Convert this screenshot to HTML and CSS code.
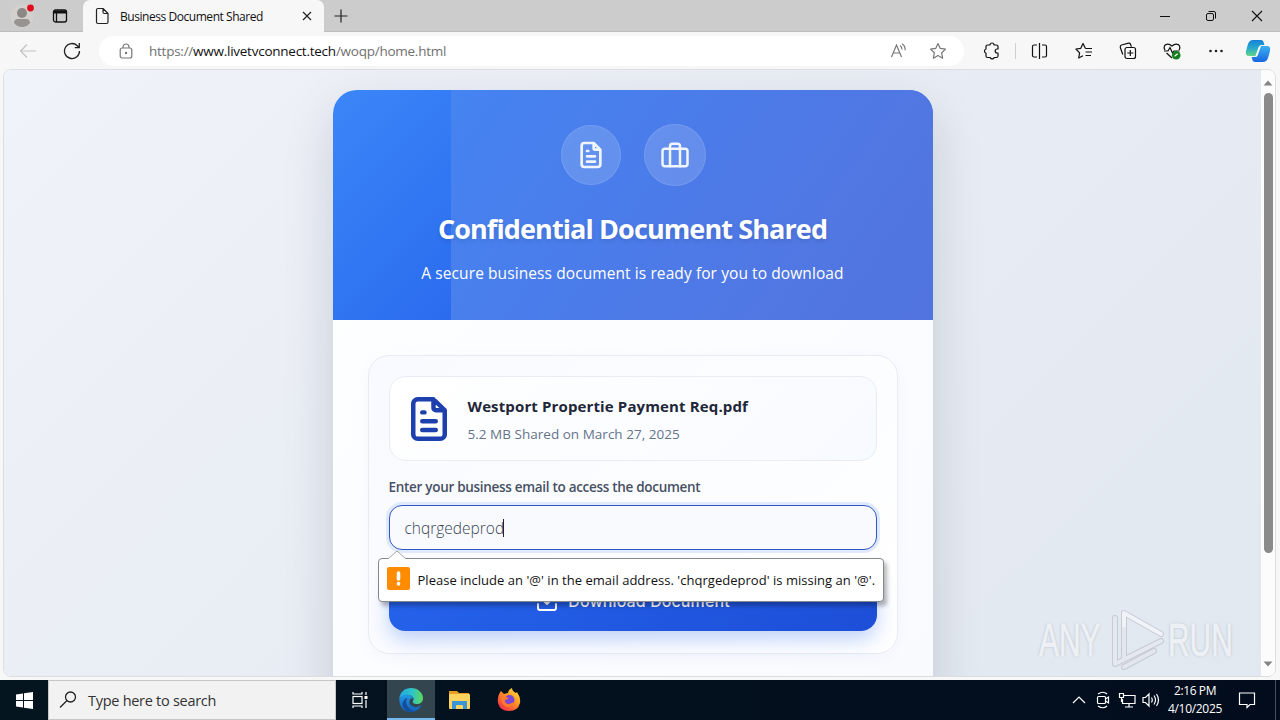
FILE: index.html
```html
<!DOCTYPE html>
<html lang="en">
<head>
<meta charset="utf-8">
<title>Business Document Shared</title>
<link rel="stylesheet" href="styles.css">
</head>
<body>
<div class="desktop">
  <div class="titlebar">
    <div class="tab-tools">
      <svg class="avatar" width="24" height="24" viewBox="0 0 24 24"><circle cx="12" cy="12" r="11.500" fill="#d3d0ce"/><circle cx="12" cy="9" r="5" fill="#8c8886"/><path d="M4 19q0-4 4-4h8q4 0 4 4q-3 4-8 4t-8-4z" fill="#979391"/><circle cx="20.500" cy="4" r="3.400" fill="#e00b1c"/></svg>
      <svg width="16" height="16" viewBox="0 0 16 16" fill="none" stroke="#111" stroke-width="1.300"><rect x="1.500" y="2" width="13" height="12" rx="2"/><path d="M1.500 4h13" stroke-width="3"/><path d="M4.500 5v9"/></svg>
    </div>
    <div class="tab">
      <svg width="16" height="18" viewBox="0 0 16 18" fill="none" stroke="#222" stroke-width="1.200" stroke-linejoin="round"><path d="M2.500 3q0-1.500 1.500-1.500h5L14 6.500V15q0 1.500-1.500 1.500H4q-1.500 0-1.500-1.500zM9 1.500V5q0 1.500 1.500 1.500H14"/></svg>
      <span class="tab-title">Business Document Shared</span>
      <svg class="tab-close" width="10" height="10" viewBox="0 0 10 10" stroke="#222" stroke-width="1.200"><path d="M1 1l8 8M9 1L1 9"/></svg>
    </div>
    <svg class="new-tab" width="16" height="16" viewBox="0 0 16 16" stroke="#222" stroke-width="1.200"><path d="M8 1.500v13M1.500 8h13"/></svg>
    <div class="window-buttons">
      <svg width="12" height="12" viewBox="0 0 12 12" stroke="#111"><path d="M1 6.500h10"/></svg>
      <svg width="12" height="12" viewBox="0 0 12 12" fill="none" stroke="#111"><rect x="1.500" y="3.500" width="7" height="7" rx="1.500"/><path d="M3.500 1.500H9q1.500 0 1.500 1.500v5.500"/></svg>
      <svg width="12" height="12" viewBox="0 0 12 12" stroke="#111" stroke-width="1.100"><path d="M1 1l10 10M11 1L1 11"/></svg>
    </div>
  </div>

  <div class="toolbar">
    <div class="nav">
      <svg width="18" height="18" viewBox="0 0 18 18" fill="none" stroke="#c3c3c3" stroke-width="1.200"><path d="M17 9H2M8 2.500L1.500 9L8 15.500"/></svg>
      <svg width="18" height="18" viewBox="0 0 18 18" fill="none" stroke="#222" stroke-width="1.300"><path d="M16.500 9A7.500 7.500 0 1 1 14.300 3.700L16 5.500M16.300 1v4.700h-4.600"/></svg>
    </div>
    <div class="address">
      <svg width="14" height="16" viewBox="0 0 14 16" fill="none" stroke="#777" stroke-width="1.200"><rect x="1.200" y="5" width="11.600" height="10" rx="2"/><path d="M4 5V4a3 3 0 0 1 6 0v1"/><circle cx="7" cy="10" r=".6" fill="#777"/></svg>
      <span class="url">https://<span class="host">www.livetvconnect.tech</span>/woqp/home.html</span>
      <svg class="read" width="18" height="16" viewBox="0 0 18 16" fill="none" stroke="#777" stroke-width="1.200"><path d="M1.500 14L6.500 2l5 12M3.200 10h6.600M10 2.500q2 1.500 2 4M12 .8q3.300 2 3.200 6.500"/></svg>
      <svg class="fav" width="18" height="18" viewBox="0 0 18 18" fill="none" stroke="#777" stroke-width="1.200" stroke-linejoin="round"><path d="M9 1.500l2.300 4.900 5.200.7-3.800 3.700.9 5.400L9 13.600l-4.600 2.600.9-5.400L1.500 7.100l5.200-.7z"/></svg>
    </div>
    <div class="extensions">
      <svg width="18" height="18" viewBox="0 0 18 18" fill="none" stroke="#111" stroke-width="1.200" stroke-linejoin="round"><path d="M5.500 3H8a2 2 0 0 1 4 0h2.500q1.500 0 1.500 1.500V7h-.8a2 2 0 0 0 0 4h.8v3q0 1.500-1.500 1.500h-2.300a2.100 2.100 0 0 1-4 0H5.500Q4 15.500 4 14v-2.800a2.200 2.200 0 0 1 0-4.200V4.500Q4 3 5.500 3z"/></svg>
    </div>
    <i class="divider"></i>
    <div class="actions">
      <svg width="18" height="16" viewBox="0 0 18 16" fill="none" stroke="#111" stroke-width="1.200"><path d="M8.500 0v16M6 2H3Q1.500 2 1.500 3.500v9Q1.500 14 3 14h3M11 2h3q1.500 0 1.500 1.500v9q0 1.500-1.500 1.500h-3"/></svg>
      <svg width="18" height="18" viewBox="0 0 18 18" fill="none" stroke="#111" stroke-width="1.200" stroke-linejoin="round"><path d="M10.500 6.500L8 1.500 5.800 6.300.9 7l3.700 3.800L3.700 16 8 13.700M10.500 6.500H17M10.500 10H17M10.500 13.500H16"/></svg>
      <svg width="18" height="18" viewBox="0 0 18 18" fill="none" stroke="#111" stroke-width="1.200"><rect x="6" y="5.500" width="10.500" height="11" rx="2"/><path d="M11.300 8v6M8.300 11h6M3.800 12.500L1.300 5.500Q1 3.500 2.500 3l7.100-1.800q1.400-.3 1.900 1l.9 2.600"/></svg>
      <svg width="18" height="18" viewBox="0 0 18 18" fill="none" stroke="#111" stroke-width="1.200"><path d="M2 8Q0 5 2.500 2.800 5.500.8 9 4q3.500-3.200 6.500-1.200Q18 5 16 8M1 9h4l2-3.500 2.500 5.500 1.500-2h5.500M3.500 11L9 16"/><circle cx="13.200" cy="13.200" r="4.300" fill="#13801b" stroke="none"/><path d="M11.500 14.200l3.200-2.500" stroke="#fff"/></svg>
      <svg width="18" height="18" viewBox="0 0 18 18" fill="#222"><circle cx="3.500" cy="9" r="1.300"/><circle cx="9" cy="9" r="1.300"/><circle cx="14.500" cy="9" r="1.300"/></svg>
    </div>
    <svg class="copilot" width="26" height="24" viewBox="0 0 26 24"><defs><linearGradient id="cpa" x1="0" y1="0" x2="0" y2="1"><stop offset="0" stop-color="#147fd7"/><stop offset=".5" stop-color="#27a9cf"/><stop offset="1" stop-color="#62d684"/></linearGradient><linearGradient id="cpb" x1="0" y1="0" x2="0" y2="1"><stop offset="0" stop-color="#3bb0f1"/><stop offset="1" stop-color="#1867e2"/></linearGradient></defs><path d="M8 1h8q2 0 2.600 2l.8 3h-3q-2 0-2.700 2.500L11 17H4q-4 0-3-5l2-7q1.500-4 5-4z" fill="url(#cpa)"/><path d="M18 23h-8q-2 0-2.600-2l-.8-3h3q2 0 2.700-2.500L15 7h7q4 0 3 5l-2 7q-1.500 4-5 4z" fill="url(#cpb)"/><path d="M13.500 8.500q.7-2 2.700-2l-3.600 10q-.7 1.500-2.500 1.500z" fill="#fff"/></svg>
  </div>

  <div class="viewport">
    <div class="page">
      <div class="card">
        <div class="hero">
          <div class="sheen"></div>
          <div class="badges">
            <div class="badge small"><svg width="32" height="32" viewBox="0 0 24 24"><path d="M14 3v4a1 1 0 0 0 1 1h4M14 3l5 5v11a2 2 0 0 1-2 2H7a2 2 0 0 1-2-2V5a2 2 0 0 1 2-2zM9 9h1M9 13h6M9 17h6"/></svg></div>
            <div class="badge large"><svg width="30" height="30" viewBox="0 0 24 24"><rect x="2" y="7" width="20" height="14" rx="2"/><path d="M16 21V5a2 2 0 0 0-2-2h-4a2 2 0 0 0-2 2v16"/></svg></div>
          </div>
          <h1><span>Confidential Document Shared</span></h1>
          <p><span>A secure business document is ready for you to download</span></p>
        </div>
        <div class="content">
          <div class="form">
            <div class="file">
              <svg class="file-icon" width="36" height="44" viewBox="4 2 16 20" preserveAspectRatio="none"><path d="M14 3v4a1 1 0 0 0 1 1h4M14 3l5 5v11a2 2 0 0 1-2 2H7a2 2 0 0 1-2-2V5a2 2 0 0 1 2-2zM9 9h1M9 13h6M9 17h6"/></svg>
              <div class="file-text">
                <div class="file-name">Westport Propertie Payment Req.pdf</div>
                <div class="file-meta">5.2 MB Shared on March 27, 2025</div>
              </div>
            </div>
            <div class="label">Enter your business email to access the document</div>
            <div class="field"><span class="value">chqrgedeprod</span><i class="caret"></i>
              <div class="bubble">
                <svg class="pointer" width="18" height="9" viewBox="0 0 18 9"><path d="M0 9L9 1l9 8" fill="#fff" stroke="#a0a3a8"/></svg>
                <svg class="warn" width="23" height="23" viewBox="0 0 23 23"><rect width="23" height="23" rx="2" fill="#ff8c00"/><path d="M11.500 6v6M11.500 16.500v.4" stroke="#fff" stroke-width="3.600" stroke-linecap="round"/></svg>
                <span class="bubble-text">Please include an '@' in the email address. 'chqrgedeprod' is missing an '@'.</span>
              </div>
            </div>
            <div class="download">
              <svg width="24" height="24" viewBox="0 0 24 24" fill="none" stroke="#fff" stroke-width="2" stroke-linecap="round" stroke-linejoin="round"><path d="M21 15v4a2 2 0 0 1-2 2H5a2 2 0 0 1-2-2v-4M7 10l5 5 5-5M12 15V3"/></svg>
              <span class="download-text">Download Document</span>
            </div>
          </div>
        </div>
      </div>
      <div class="watermark">
        <span class="wm-any">ANY</span>
        <svg width="56" height="62" viewBox="0 0 56 62" fill="none" stroke-linejoin="round" stroke-linecap="round"><g stroke="#c3c8d2" stroke-width="6"><path d="M15 43V4L52 25"/><path d="M6 9v46L52 32"/><path d="M15 20v28M15 58l30-16"/></g><g stroke="#f3f5f9" stroke-width="4"><path d="M15 43V4L52 25"/><path d="M6 9v46L52 32" stroke="#e6e9ef"/><path d="M15 20v28M15 58l30-16" stroke="#e3e6ec"/></g></svg>
        <span class="wm-run">RUN</span>
      </div>
    </div>
    <div class="scrollbar">
      <svg width="10" height="6" viewBox="0 0 10 6"><path d="M.5 5.500L5 .5l4.500 5z" fill="#858585"/></svg>
      <i class="thumb"></i>
      <svg width="10" height="6" viewBox="0 0 10 6"><path d="M.5 .5h9L5 5.500z" fill="#858585"/></svg>
    </div>
  </div>

  <div class="taskbar">
    <div class="start"><svg width="17" height="17" viewBox="0 0 17 17" fill="#fff"><path d="M0 2.500L7 1.500V8H0zM8 1.300L17 0v8H8zM0 9h7v6.500l-7-1zM8 9h9v8l-9-1.300z"/></svg></div>
    <div class="search"><svg width="18" height="18" viewBox="0 0 18 18" fill="none" stroke="#222" stroke-width="1.300"><circle cx="11.500" cy="6" r="5"/><path d="M8 9.500L1 16.500"/></svg><span class="search-text">Type here to search</span></div>
    <div class="app taskview"><svg width="18" height="18" viewBox="0 0 18 18" fill="none" stroke="#fff" stroke-width="1.200"><rect x="2" y="5.500" width="9" height="7"/><path d="M2 1v2h9V1M2 17v-2h9v2M15 1v3M15 9v8"/><path d="M13.500 6.500h3" stroke-width="3"/></svg></div>
    <div class="app active"><svg width="24" height="24" viewBox="0 0 24 24"><defs><linearGradient id="eg" x1="0" y1="0" x2="1" y2="0"><stop offset="0" stop-color="#24a7e3"/><stop offset=".55" stop-color="#2dc5c8"/><stop offset="1" stop-color="#62d957"/></linearGradient><linearGradient id="eb" x1="0" y1="0" x2="0" y2="1"><stop offset="0" stop-color="#229be2"/><stop offset="1" stop-color="#1260bd"/></linearGradient></defs><path d="M.3 10.500C1 4 6 0 12 0c7 0 12 5 12 10 0 4-3 6-6 6s-5-1.300-4-3c2-3-1-6-5-6-4.500 0-7.500 2-8.700 3.500z" fill="url(#eg)"/><path d="M.2 11C2 7 6 6 9 6.500q4 .8 5.500 4-3-1-4 2-1 5 5 6.500 4 .7 7-2Q19 24 12 24 1 24 .2 11z" fill="url(#eb)"/><path d="M8.500 9.500Q5 16 11 21q2 2 5 2-4 1.500-8.500 0-5.500-4-3.500-9 1.500-3.500 4.500-4.500z" fill="#154d9b"/></svg></div>
    <div class="app"><svg width="23" height="20" viewBox="0 0 23 20"><path d="M1 1h8l2 2h10v4H1z" fill="#e59f22"/><rect x="1" y="4" width="21" height="15" rx="1" fill="#ffd45e"/><path d="M4 19v-8h15v8h-4v-3q0-1-1-1H9q-1 0-1 1v3z" fill="#3c95d5"/></svg></div>
    <div class="app firefox"><svg width="24" height="24" viewBox="0 0 24 24"><defs><linearGradient id="ff" x1="1" y1="0" x2=".2" y2="1"><stop offset="0" stop-color="#ffec45"/><stop offset=".45" stop-color="#ff9b25"/><stop offset="1" stop-color="#f4284d"/></linearGradient></defs><path d="M4 3l3 3q3-1 4-1 0-3 4-5 0 3 4 5l1-1q4 6 3 11-2 8-11 8T1 15Q0 8 4 3z" fill="url(#ff)"/><circle cx="12.500" cy="12" r="5" fill="#7947d6"/><path d="M4 9q5-2 8 2-5 0-4 3 2 4 9 0-1 5-7 5-6-2-6-10z" fill="#ff7a2a"/></svg></div>
    <div class="tray">
      <svg width="14" height="14" viewBox="0 0 14 14" fill="none" stroke="#fff" stroke-width="1.200"><path d="M1 10l6-6 6 6"/></svg>
      <svg class="meet" width="14" height="18" viewBox="0 0 14 18" fill="none" stroke="#fff" stroke-width="1.200"><rect x="1.500" y="5.500" width="8" height="7" rx="1"/><path d="M9.500 8l3-2v6l-3-2M2 3q5-3.500 9 0M2 15q5 3.500 9 0"/></svg>
      <svg width="18" height="16" viewBox="0 0 18 16" fill="none" stroke="#fff" stroke-width="1.200"><path d="M5.500 3.500H17v8H4.500V7M11 11.500V15M7 15h8"/><path d="M1.500 1.500h4v4h-4zM3.500 5.500V10" /></svg>
      <svg class="sound" width="18" height="16" viewBox="0 0 18 16" fill="none" stroke="#fff" stroke-width="1.200"><path d="M1 5.500h2.500L7 2v12l-3.500-3.500H1zM9.500 5.500q1.500 2.500 0 5M12 3.500q3 4.500 0 9M14.500 2q4 6 0 12"/></svg>
      <div class="clock"><span class="time">2:16 PM</span><span class="date">4/10/2025</span></div>
      <svg width="18" height="18" viewBox="0 0 18 18" fill="none" stroke="#fff" stroke-width="1.200"><path d="M1.500 2h15v11.500H12l-3 3v-3H1.500z"/></svg>
    </div>
  </div>
</div>
</body>
</html>
```
FILE: styles.css
```css
* { box-sizing: border-box; }
body { margin: 0; font-family: "Open Sans", "Noto Sans", sans-serif; }
svg { display: block; flex: none; }
span { white-space: nowrap; }
.desktop { width: 1280px; height: 720px; overflow: hidden; display: flex; flex-direction: column; background: #f7f7f7; }

.titlebar { height: 32px; flex: none; display: flex; background: #ccc; border-bottom: 1px solid #bdbdbd; }
.tab-tools { width: 83px; padding-left: 10px; display: flex; align-items: center; gap: 18px; }
.avatar { margin-top: 1px; }
.tab { width: 241px; height: 32px; padding-left: 11px; display: flex; align-items: center; background: #f7f7f7; border-radius: 7px 7px 0 0; }
.tab-title { width: 160px; margin-left: 10px; font-size: 12px; letter-spacing: -.45px; color: #111; }
.tab-close { margin-left: 22px; }
.new-tab { margin: 8px 0 0 9px; }
.window-buttons { margin-left: auto; padding-right: 17px; display: flex; align-items: center; gap: 34px; }

.toolbar { height: 37px; flex: none; display: flex; align-items: center; background: #f7f7f7; }
.nav { width: 99px; padding-left: 19px; display: flex; gap: 26px; }
.address { width: 865px; height: 30px; margin-top: 1px; padding-left: 20px; display: flex; align-items: center; background: #fff; border-radius: 15px; }
.url { width: 310px; margin-left: 16px; font-size: 13.500px; letter-spacing: -.25px; color: #707070; }
.host { color: #111; }
.read { margin-left: 431px; }
.fav { margin-left: 21px; }
.extensions { margin-left: 18px; }
.divider { width: 1px; height: 16px; margin-left: 15px; background: #d0d0d0; }
.actions { margin-left: 15px; display: flex; align-items: center; gap: 26px; }
.copilot { margin-left: 20px; }

.viewport { height: 608px; width: 1273px; flex: none; margin: 0 0 0 3px; display: flex; border: 1px solid #dcdfe2; border-radius: 8px; overflow: hidden; background: #fff; }
.page { width: 1257px; height: 606px; flex: none; position: relative; padding-top: 20px; display: flex; justify-content: center; align-items: flex-start; overflow: hidden; background: linear-gradient(135deg, #f0f3f9 0%, #e9edf4 40%, #e2e8f0 100%); }
.card { width: 600px; height: 680px; border-radius: 24px; overflow: hidden; background: linear-gradient(135deg, #fff, #f8faff); box-shadow: 0 20px 50px rgba(15, 23, 42, .15); }
.hero { height: 230px; position: relative; padding-top: 34px; background: linear-gradient(135deg, #3b86f8 0%, #2563eb 55%, #1d50da 100%); color: #fff; }
.sheen { position: absolute; top: 0; right: 0; bottom: 0; width: 482px; background: linear-gradient(125deg, #4584f1 0%, #4b7be9 45%, #5177e2 75%, #5073df 100%); }
.badges { position: relative; padding-left: 1px; display: flex; justify-content: center; align-items: center; gap: 23px; }
.badge { display: flex; align-items: center; justify-content: center; border-radius: 50%; border: 1px solid rgba(255, 255, 255, .1); background: rgba(255, 255, 255, .15); }
.badge svg { fill: none; stroke: #f0f5ff; stroke-width: 2; stroke-linecap: round; stroke-linejoin: round; }
.badge.small { width: 60px; height: 60px; }
.badge.large { width: 62px; height: 62px; }
.hero h1 { position: relative; margin: 23px 0 0; font-size: 27px; line-height: 40px; font-weight: 700; text-align: center; letter-spacing: -.89px; text-shadow: 0 2px 4px rgba(0, 0, 0, .12); }
.hero p { position: relative; margin: 12px 0 0; font-size: 15.500px; line-height: 24px; font-weight: 500; text-align: center; letter-spacing: .09px; }
.content { padding: 35px; }
.form { height: 299px; padding: 20px; border: 1px solid #e8ebf3; border-radius: 21px; background: linear-gradient(135deg, #f8faff, #fff); box-shadow: 0 4px 15px rgba(30, 60, 120, .03); }
.file { height: 85px; padding-left: 21px; display: flex; align-items: center; gap: 21px; border: 1px solid #e8edf4; border-radius: 17px; background: linear-gradient(135deg, #fff, #f7faff); }
.file-icon { fill: none; stroke: #1e40af; stroke-width: 2; stroke-linecap: round; stroke-linejoin: round; }
.file-name { font-size: 15px; line-height: 24px; font-weight: 700; letter-spacing: .13px; color: #1e2637; }
.file-meta { margin-top: 5px; font-size: 13.500px; line-height: 22px; letter-spacing: .02px; color: #64748b; }
.file-text { padding-top: 2px; }
.label { height: 20px; margin: 17px 0 7px; font-size: 13.500px; line-height: 19px; font-weight: 600; letter-spacing: -.3px; color: #475063; white-space: nowrap; }
.field { position: relative; height: 45px; padding-left: 15px; display: flex; align-items: center; border: 1px solid #3155c8; border-radius: 13px; background: #f8fafd; box-shadow: 0 0 0 3px #e0eafd; color: #3a4558; }
.value { width: 98px; font-size: 15.500px; font-weight: 300; letter-spacing: 0; }
.caret { width: 1px; height: 18px; background: #222; }
.bubble { position: absolute; z-index: 2; left: -12px; top: 52px; width: 506px; height: 44px; padding: 0 0 2px 8px; display: flex; align-items: center; background: #fff; border: 1px solid #85888d; border-radius: 4px; box-shadow: 3px 4px 4px rgba(0, 0, 0, .28); color: #111; font-size: 13px; }
.warn { margin-top: -1px; }
.pointer { position: absolute; left: 9px; top: -9px; }
.bubble-text { margin-left: 8px; padding-top: 2px; letter-spacing: .03px; }
.download { height: 60px; margin-top: 21px; display: flex; justify-content: center; align-items: center; gap: 9px; border-radius: 16px; background: linear-gradient(135deg, #2563eb, #1d4ed8); color: #fff; box-shadow: 0 9px 20px rgba(37, 99, 235, .28); }
.download-text { font-family: Inter, sans-serif; font-size: 16px; font-weight: 500; letter-spacing: .1px; }
.watermark { position: absolute; left: 1035px; top: 539px; display: flex; align-items: center; font-family: "Liberation Sans", sans-serif; font-size: 46px; line-height: 62px; color: #eff2f7; opacity: .9; text-shadow: 0 0 3px #9aa1ad; -webkit-text-stroke: 1px #eff2f7; }
.wm-any, .wm-run { display: block; width: 66px; transform: scaleX(.65); transform-origin: left; }
.wm-any { width: 70px; }
.wm-run { margin-left: 3px; }
.scrollbar { flex: 1; padding: 10px 0 9px; display: flex; flex-direction: column; align-items: center; background: #fcfcfc; }
.thumb { width: 9px; height: 460px; margin: 7px 0 auto; border-radius: 5px; background: #8a8a8a; }

.taskbar { height: 40px; margin-top: 3px; flex: none; display: flex; background: linear-gradient(90deg, #04151f, #020c1d); color: #fff; }
.start { width: 48px; display: flex; align-items: center; justify-content: center; }
.search { width: 288px; padding-left: 10px; display: flex; align-items: center; background: #f2f2f2; border: 1px solid #c6c6c6; color: #333; }
.search-text { margin-left: 11px; font-size: 14.500px; letter-spacing: -.28px; }
.app { width: 48px; display: flex; align-items: center; justify-content: center; }
.app.taskview { width: 51px; padding-right: 3px; }
.app.firefox { padding-left: 3px; }
.app.active { background: #33464f; border-bottom: 2px solid #76b9ed; padding-top: 2px; }
.tray { margin-left: auto; width: 208px; padding-left: 4px; margin-right: 4px; display: flex; align-items: center; gap: 8px; border-right: 1px solid #47505c; }
.meet { margin-left: 2px; }
.sound { margin-left: -2px; }
.clock { width: 60px; margin: 0 5px 0 -3px; display: flex; flex-direction: column; align-items: center; font-size: 12px; line-height: 18px; letter-spacing: -.4px; }
.date { letter-spacing: -.3px; }
```
